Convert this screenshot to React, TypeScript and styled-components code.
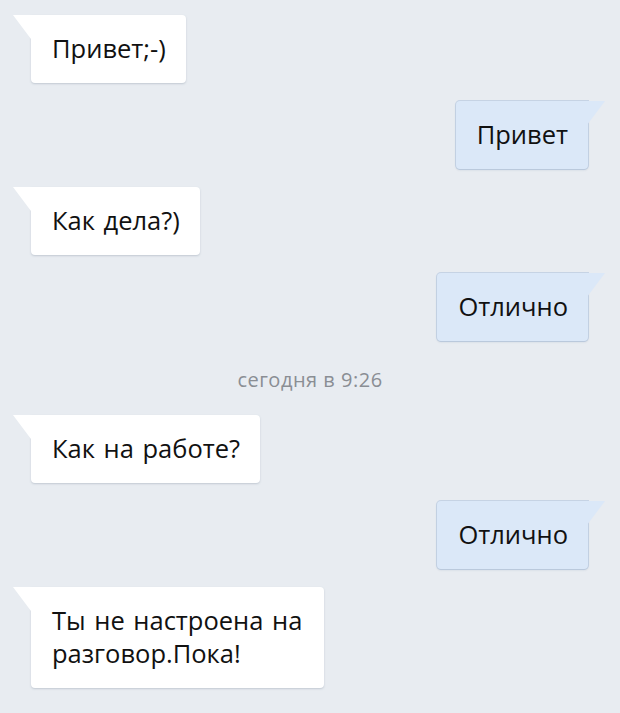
import styled, { createGlobalStyle } from 'styled-components';

const GlobalStyle = createGlobalStyle`
    html, body {
        margin: 0;
        padding: 0;
        background: #e8ecf1;
    }
    body {
        font-family: "Open Sans", "Noto Sans", sans-serif;
        -webkit-font-smoothing: antialiased;
    }
`;

type Side = 'in' | 'out';

type Message = {
    side: Side,
    text: string,
};

const ChatContainer = styled.div`
    width: 620px;
    height: 713px;
    box-sizing: border-box;
    padding: 15px 15px 0 13px;
    display: flex;
    flex-direction: column;
    gap: 18px;
    overflow: hidden;
`;

const Row = styled.div<{ $side: Side }>`
    display: flex;
    justify-content: ${p => (p.$side === 'in' ? 'flex-start' : 'flex-end')};
    padding-left: ${p => (p.$side === 'in' ? '18px' : '0')};
    padding-right: ${p => (p.$side === 'out' ? '17px' : '0')};
`;

const Bubble = styled.div<{ $side: Side }>`
    position: relative;
    max-width: 252px;
    padding: 17px 20px 18px 21px;
    font-size: 25.5px;
    line-height: 33px;
    word-spacing: 2px;
    color: #111;
    background: ${p => (p.$side === 'in' ? '#ffffff' : '#dbe8f8')};
    border-radius: ${p => (p.$side === 'in' ? '0 4px 4px 4px' : '4px 0 4px 4px')};
    box-shadow: ${p => (p.$side === 'in'
        ? '0 1px 2px rgba(120, 135, 155, 0.35)'
        : '0 0 0 1px rgba(160, 185, 215, 0.45), 0 1px 2px rgba(120, 140, 170, 0.3)')};
    &::before {
        content: '';
        position: absolute;
        top: 0;
        width: 18px;
        height: 24px;
        background: ${p => (p.$side === 'in' ? '#ffffff' : '#dbe8f8')};
        ${p => (p.$side === 'in'
        ? 'left: -18px; clip-path: polygon(0 0, 100% 0, 100% 100%);'
        : 'right: -17px; clip-path: polygon(0 0, 100% 0, 0 100%);')}
    }
`;

const Stamp = styled.div`
    height: 38px;
    padding: 2px 0 0 2px;
    box-sizing: border-box;
    line-height: 38px;
    text-align: center;
    font-size: 20px;
    letter-spacing: 0.5px;
    color: #8a8e94;
`;

const before: Message[] = [
    { side: 'in', text: 'Привет;-)' },
    { side: 'out', text: 'Привет' },
    { side: 'in', text: 'Как дела?)' },
    { side: 'out', text: 'Отлично' },
];

const after: Message[] = [
    { side: 'in', text: 'Как на работе?' },
    { side: 'out', text: 'Отлично' },
    { side: 'in', text: 'Ты не настроена на разговор.Пока!' },
];

const renderMessages = (list: Message[], prefix: string) => list.map((m, i) => (
    <Row key={prefix + i} $side={m.side}>
        <Bubble $side={m.side}>{m.text}</Bubble>
    </Row>
));

export default function App() {
    return <>
        <GlobalStyle />
        <ChatContainer>
            {renderMessages(before, 'a')}
            <Stamp>сегодня в 9:26</Stamp>
            {renderMessages(after, 'b')}
        </ChatContainer>
    </>;
}
